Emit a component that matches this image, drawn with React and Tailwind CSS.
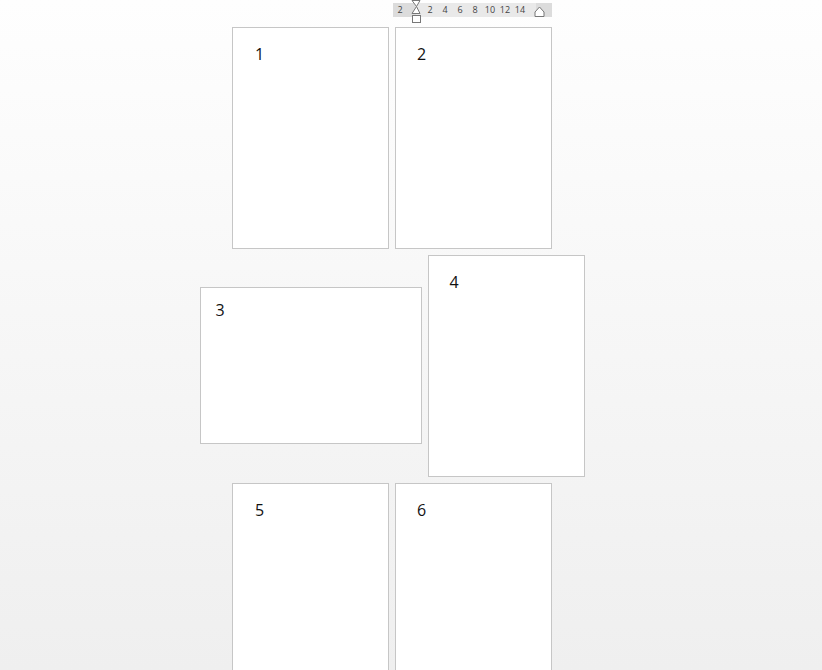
const font = { fontFamily: '"Open Sans", "Liberation Sans", sans-serif' };

const Page = ({ n, className }) => (
  <div className={"bg-white border border-[#c6c6c6] shrink-0 " + className}>
    <div className="text-[16px] leading-[20px] text-[#111]">{n}</div>
  </div>
);

const Ruler = () => {
  const ticks = ["2", "4", "6", "8", "10", "12", "14"];
  return (
    <div className="relative h-[24px] w-[159px] ml-[2px] shrink-0">
      <div className="absolute left-0 top-[3px] h-[14px] w-full flex bg-[#e9e9e9]">
        <div className="w-[23px] bg-[#dcdcdc] flex items-center pl-[5px] text-[9px] text-[#444]">2</div>
        <div className="flex-1 flex items-center pl-[7px] text-[9px] text-[#444]">
          {ticks.map((t) => (
            <span key={t} className="w-[15px] text-center">
              {t}
            </span>
          ))}
        </div>
        <div className="w-[16px] bg-[#dcdcdc]" />
      </div>
      {/* indent markers */}
      <svg className="absolute left-[18px] top-0" width="11" height="24" viewBox="0 0 11 24">
        <path d="M1 0.5 H9 L5.5 6.5 Z" fill="#fff" stroke="#777" />
        <path d="M5.5 6.5 L1 13.5 H9 Z" fill="#fff" stroke="#777" />
        <rect x="1.5" y="15.5" width="8" height="7" fill="#fff" stroke="#777" />
      </svg>
      <svg className="absolute left-[141px] top-[6px]" width="11" height="12" viewBox="0 0 11 12">
        <path d="M5.5 1 L1 6 V10.5 H10 V6 Z" fill="#fff" stroke="#777" />
      </svg>
    </div>
  );
};

export default function App() {
  return (
    <div
      style={font}
      className="h-[670px] w-[822px] overflow-hidden bg-gradient-to-b from-[#fefefe] to-[#efefef] flex flex-col items-center pr-[38px]"
    >
      <div className="w-[319px] flex">
        <div className="w-[161px]" />
        <Ruler />
      </div>
      <div className="flex flex-col items-center gap-[6px] mt-[3px]">
        <div className="flex gap-[6px]">
          <Page n="1" className="w-[157px] h-[222px] pl-[22px] pt-[16px]" />
          <Page n="2" className="w-[157px] h-[222px] pl-[21px] pt-[16px]" />
        </div>
        <div className="flex items-start gap-[6px]">
          <Page n="3" className="w-[222px] h-[157px] mt-[32px] pl-[15px] pt-[12px]" />
          <Page n="4" className="w-[157px] h-[222px] pl-[21px] pt-[16px]" />
        </div>
        <div className="flex gap-[6px]">
          <Page n="5" className="w-[157px] h-[222px] pl-[22px] pt-[16px]" />
          <Page n="6" className="w-[157px] h-[222px] pl-[21px] pt-[16px]" />
        </div>
      </div>
    </div>
  );
}
